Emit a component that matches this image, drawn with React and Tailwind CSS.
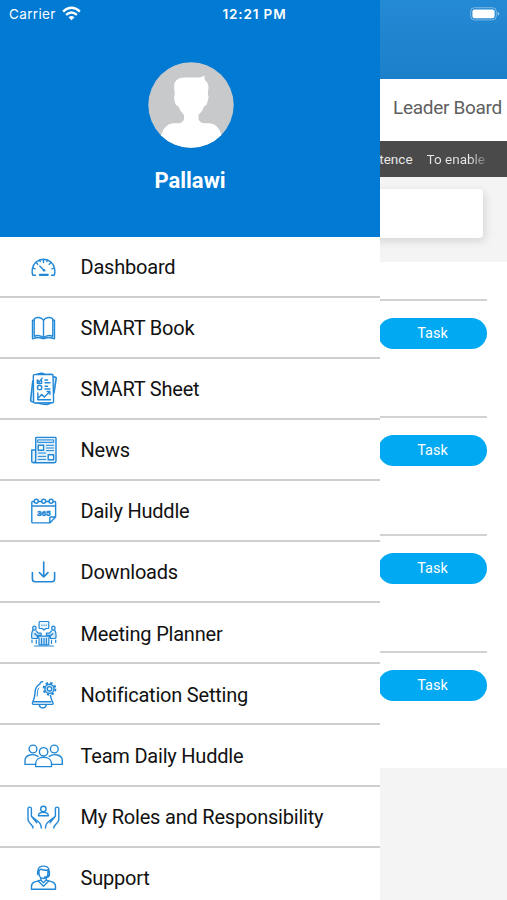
import React, { useState } from 'react';

const BLUE = '#2288d6';
const PALE = '#d3e9f9';

const Icon = ({ children }) => (
  <svg
    width="40"
    height="40"
    viewBox="0 0 40 40"
    fill="none"
    stroke={BLUE}
    strokeWidth="1.4"
    strokeLinecap="round"
    strokeLinejoin="round"
    className="shrink-0"
  >
    {children}
  </svg>
);

const DashboardIcon = () => (
  <Icon>
    <path d="M11.5 28.3H8.9C7.9 26.5 7.9 24.5 8.3 22A11.3 11.3 0 0 1 30.7 22C31.1 24.5 31.1 26.5 30.1 28.3H27.5" />
    <path d="M19.5 12.5v3M12.2 15.5l1.6 1.9M26.8 15.5l-1.6 1.9M8.6 21.2l2.5.7M30.4 21.2l-2.5.7M15.6 13.3l.6 1.3M23.4 13.3l-.6 1.3" />
    <path d="M15.8 19l4.3 4.4" />
    <circle cx="20" cy="23.3" r="1" fill={BLUE} strokeWidth="0.6" />
    <path d="M15.8 27.8h8" strokeWidth="2.2" />
  </Icon>
);

const BookIcon = () => (
  <Icon>
    <path d="M10.3 28.5L19.5 30.2L28.7 28.5L30.5 31H8.5Z" fill={PALE} stroke="none" />
    <path d="M19.5 12.3C17.6 9 12 8.6 10.2 11V28.3C12.8 27 17 27.2 19.5 29.8C22 27.2 26.2 27 28.8 28.3V11C27 8.6 21.4 9 19.5 12.3V29.5" fill="#fff" />
    <path d="M9.9 12.2H8.5V30.8C12 29.4 16.5 29.2 18.4 30.6H20.6C22.5 29.2 27 29.4 30.5 30.8V12.2H29.1" />
  </Icon>
);

const SheetIcon = () => (
  <Icon>
    <path d="M10.5 6L17 4.2L20 4.9M29 7.6L31.6 8.2Q32.4 8.5 32.2 9.5L30 24M8.8 12L6.6 31Q6.5 32.3 8 32.7L18 35L23 35.5L26 34.6" fill={PALE} strokeWidth="1.6" />
    <path d="M10.5 5.6L27.7 5.2Q29 5.2 29 6.6L29.6 32.4Q29.6 33.7 28.4 33.7L11 34Q9.6 34 9.6 32.7L9.3 7Q9.3 5.7 10.5 5.6Z" fill="#fff" />
    <path d="M13.6 10.9l1.5 2.2 3-4M13.3 11V14.4h4.3v-2.7M21 11h2.6M21 13.8h5" />
    <circle cx="15.6" cy="18.4" r="2.2" />
    <path d="M21 17.3h2.6M21 20h5" />
    <path d="M13.8 24V30.7H26.5M14.5 28.8L17.7 25.6L20.4 27.9L25.7 22.8M23 22.5h2.9v2.8" />
  </Icon>
);

const NewsIcon = () => (
  <Icon>
    <path d="M11.7 30.5V8Q11.7 7.4 12.3 7.4H31.3Q32 7.4 32 8V31Q32 32.7 30.3 32.7H9.7Q7.7 32.7 7.7 30.7V20H11.7V30.6Q11.7 32.5 9.8 32.5" fill="#e3f1fb" />
    <path d="M14 9.9H29.7V12.4H14Z" fill={PALE} strokeWidth="1" />
    <path d="M14.2 15.2H19.6V20.2H14.2ZM24.2 24.8H29.6V29.8H24.2Z" fill="#fff" />
    <path d="M22.4 15.3h7.2M22.4 18h7.2M22.4 20.6h7.2M14.2 23h7.4M14.2 26.4h7.4M14.2 29.4h7.4" strokeWidth="1" />
  </Icon>
);

const CalendarIcon = () => (
  <Icon>
    <path d="M10.2 10.5H8.6Q7.8 10.5 7.8 11.3V31Q7.8 31.9 8.6 31.9H25.8L31.6 26V11.3Q31.6 10.5 30.8 10.5H29.3M14.3 10.5H17.6M21.8 10.5H25.1M8 15H31.4M25.8 31.7V27Q25.8 26 26.8 26H31.4" />
    <circle cx="12.3" cy="10.3" r="2" />
    <circle cx="19.7" cy="10.3" r="2" />
    <circle cx="27.1" cy="10.3" r="2" />
    <text
      x="19.8"
      y="25.4"
      textAnchor="middle"
      fontFamily="Roboto, sans-serif"
      fontSize="7.6"
      fontWeight="900"
      textLength="13.4"
      lengthAdjust="spacingAndGlyphs"
      fill={BLUE}
      strokeWidth="0.4"
    >
      365
    </text>
  </Icon>
);

const DownloadIcon = () => (
  <Icon>
    <g strokeWidth="1.6">
      <path d="M19.7 10V24.4M15.4 20.6L19.7 24.9L24 20.6" />
      <path d="M8.4 20.5V27Q8.4 29.8 11.2 29.8H27.8Q30.6 29.8 30.6 27V20.5" />
    </g>
  </Icon>
);

const MeetingIcon = () => (
  <Icon>
    <g strokeWidth="1.2" fill={PALE}>
      <path d="M15.7 7.5H24Q24.8 7.5 24.8 8.3V13.6Q24.8 14.5 24 14.5H21.7L20 16.2L18.3 14.5H16Q15.1 14.5 15.1 13.6V8.5Q15.1 7.5 15.7 7.5Z" fill="#eef7fd" />
      <path d="M17.8 11.2h.2M20 11.2h.2M22.2 11.2h.2" />
      <ellipse cx="10.4" cy="14.2" rx="1.7" ry="2" />
      <ellipse cx="29.4" cy="14.2" rx="1.7" ry="2" />
      <path d="M8.9 16.5Q7.5 18 7.6 21V23.5Q7.6 24.5 9 24.5H13.3V21.5L10.9 20M12.2 17L14.2 19.2H17.2V21.3H12.5L10.8 19.5M30.8 16.5Q32.1 18 32 21V23.5Q32 24.5 30.6 24.5H26.3V21.5L28.7 20M27.4 17L25.4 19.2H22.4V21.3H27.1L28.8 19.5" />
      <path d="M14 22.2H25.8L24.8 24.4V30.8H15V24.4Z" />
      <path d="M17.5 24.4V30.6M20 24.4V30.6M22.4 24.4V30.6M8 26V28.5M31.7 26V28.5M12.3 26V29.5M27.5 26V29.5M10.5 32H29.5" />
    </g>
  </Icon>
);

const BellIcon = () => (
  <Icon>
    <path d="M18.8 6.9A2.2 2.2 0 0 0 15.9 9.1C12.3 10.7 11.1 14 11 18C10.8 23 9.6 25.3 8.5 27.8Q8.2 29.4 9.4 29.4H28.3Q29.4 29.4 29 27.8C27.4 25 26.6 23.2 26.5 20.5M15.3 30Q15.8 32.9 18.7 33Q21.7 32.9 22.2 30M10.2 26.7H26.8" fill="none" />
    <path d="M13.2 21C13.5 18 13 15 14.8 13" strokeWidth="1" />
    <circle cx="25.5" cy="13.8" r="5.9" strokeWidth="2" strokeLinecap="butt" strokeDasharray="2.4 2.234" />
    <circle cx="25.5" cy="13.8" r="4.6" fill={PALE} />
    <circle cx="25.5" cy="13.8" r="2.2" fill="#fff" />
  </Icon>
);

const TeamIcon = () => (
  <Icon>
    <circle cx="9" cy="13" r="3.9" />
    <circle cx="30.3" cy="13" r="3.9" />
    <circle cx="19.6" cy="15.8" r="4.2" />
    <path d="M11 28.4H1V24.4C1.2 18.5 9.5 17.2 14 20.4M28.3 28.4H38.3V24.4C38.1 18.5 29.8 17.2 25.3 20.4" />
    <path d="M11.7 30.6V27C12 19.4 27.2 19.4 27.5 27V30.6Z" />
  </Icon>
);

const RolesIcon = () => (
  <Icon>
    <circle cx="19.4" cy="11.9" r="2.7" />
    <path d="M14.4 18.8C14.4 14.2 24.4 14.2 24.4 18.8Z" />
    <path d="M8.9 31V29.8L4.6 24.4Q4 23.3 4 22V11.8A1.7 1.7 0 0 1 7.4 11.8V19.2L13.8 24.2Q17.3 27 17.3 31M7.5 19.3L12.8 25.8" />
    <path d="M29.9 31V29.8L34.2 24.4Q34.8 23.3 34.8 22V11.8A1.7 1.7 0 0 0 31.4 11.8V19.2L25 24.2Q21.5 27 21.5 31M31.3 19.3L26 25.8" />
  </Icon>
);

const SupportIcon = () => (
  <Icon>
    <path d="M14 14V12.5C14 6.6 25 6.6 25 12.5V14M15 12.8Q16.2 10.6 18 11.5Q20.5 12.6 23.9 12V15.5A4.4 4.9 0 0 1 15 15.5Z" />
    <path d="M13.8 13.8V16.3M25.2 13.8V16.8Q24.8 19.4 20.8 19.2" strokeWidth="1.8" />
    <path d="M16.8 19.8V22L19.5 24.8L22.2 22V19.8M16.5 22.2L10.8 23.8Q7.5 25 7.5 28.2V31.2H31.5V28.2Q31.5 25 28.2 23.8L22.5 22.2M14.5 23.3L19.5 28.3L24.5 23.3" />
  </Icon>
);

const menuItems = [
  { label: 'Dashboard', icon: DashboardIcon },
  { label: 'SMART Book', icon: BookIcon },
  { label: 'SMART Sheet', icon: SheetIcon },
  { label: 'News', icon: NewsIcon },
  { label: 'Daily Huddle', icon: CalendarIcon },
  { label: 'Downloads', icon: DownloadIcon },
  { label: 'Meeting Planner', icon: MeetingIcon },
  { label: 'Notification Setting', icon: BellIcon },
  { label: 'Team Daily Huddle', icon: TeamIcon },
  { label: 'My Roles and Responsibility', icon: RolesIcon },
  { label: 'Support', icon: SupportIcon },
];

const Avatar = () => (
  <svg width="86" height="86" viewBox="0 0 86 86" className="ml-px">
    <defs>
      <clipPath id="avatar">
        <circle cx="43" cy="43" r="42.7" />
      </clipPath>
    </defs>
    <g clipPath="url(#avatar)">
      <rect width="86" height="86" fill="#c8c9cb" />
      <path
        fill="#fff"
        d="M31.5 16.2Q34 15.3 38 15.5H49Q54 15.7 56.3 13.6L56.8 18Q60 20 60.5 25L59.8 32Q61 34 60 38Q59 43.5 56 44.5Q54.5 49.5 50.5 53V57Q51.5 61 57 61.3H62Q70 62 73 72L78 86H8L13.5 72Q17 62 25 61.3H30Q35 61 36 57V53Q32.5 50 30.5 44.5Q27.5 43.5 26.5 39Q25.5 35 26.8 32Q25.5 24 26.8 20.5Q28 17.5 31.5 16.2Z"
      />
    </g>
  </svg>
);

const StatusBar = () => (
  <div className="absolute inset-x-0 top-0 flex h-7 items-center justify-between pl-[9px] pr-[7px] font-['Inter',sans-serif] text-white">
    <div className="flex w-40 items-center gap-1.5">
      <span className="text-[13.5px] tracking-[0.35px]">Carrier</span>
      <svg width="19" height="15" viewBox="0 0 19 15" fill="none" stroke="#fff" strokeWidth="2.4" className="-mt-0.5">
        <path d="M1.1 5.6Q9.5 -1.9 17.9 5.6" />
        <path d="M4.1 8.8Q9.5 4.1 14.9 8.8" />
        <path d="M6.5 11.2Q9.5 8.8 12.5 11.2L9.5 14.3Z" fill="#fff" stroke="none" />
      </svg>
    </div>
    <span className="text-[13.5px] font-semibold tracking-[0.85px]">12:21 PM</span>
    <div className="flex w-40 justify-end">
      <svg width="30" height="14" viewBox="0 0 30 14" className="-mt-px">
        <rect x="0.7" y="0.7" width="25.6" height="12.2" rx="3.8" fill="none" stroke="#fff" strokeOpacity="0.4" />
        <rect x="2.4" y="2.4" width="22.2" height="8.8" rx="2.2" fill="#fff" />
        <path d="M27.6 4.8Q29.4 5.3 29.4 6.8Q29.4 8.3 27.6 8.8Z" fill="#fff" fillOpacity="0.5" />
      </svg>
    </div>
  </div>
);

const HomeScreen = () => (
  <div className="flex h-full flex-col bg-[#f4f4f4]">
    <div className="h-[79px] shrink-0 bg-linear-to-b from-[#258ad5] to-[#1b7fca]" />
    <div className="flex h-[62px] shrink-0 items-center justify-end bg-white pr-[5px]">
      <span className="pb-1 text-[19px] tracking-[-0.3px] text-[#606060]">Leader Board</span>
    </div>
    <div className="flex h-9 shrink-0 items-center justify-end gap-3.5 bg-[#4a4a4a] pr-[22px] text-[13.5px] text-[#e8e8e8]">
      <span>tence</span>
      <span className="bg-linear-to-r from-[#e8e8e8] from-75% to-[#777] bg-clip-text text-transparent">
        To enable
      </span>
    </div>
    <div className="h-[85px] shrink-0 pl-6 pr-6 pt-3">
      <div className="h-[49px] rounded bg-white shadow-[2px_3px_10px_rgba(0,0,0,0.13)]" />
    </div>
    <div className="h-[506px] shrink-0 bg-white pl-5 pr-5 pt-[37px]">
      {[1, 2, 3, 4].map((n) => (
        <div key={n} className="flex h-[117.3px] items-start justify-end border-t-2 border-[#d2d2d2] pt-[17px]">
          <button className="h-[31px] w-[109px] rounded-full bg-[#00a9f1] pt-px text-[14.5px] text-white">
            Task
          </button>
        </div>
      ))}
    </div>
  </div>
);

const Drawer = ({ active, onSelect }) => (
  <aside className="absolute inset-y-0 left-0 flex w-[380px] flex-col overflow-hidden bg-white">
    <div className="flex h-[236.7px] shrink-0 flex-col items-center bg-[#007ad3] pt-[62px]">
      <Avatar />
      <h2 className="mt-[17px] text-[22px] font-bold leading-8 text-white">Pallawi</h2>
    </div>
    <nav className="flex flex-col">
      {menuItems.map(({ label, icon: ItemIcon }) => (
        <button
          key={label}
          onClick={() => onSelect(label)}
          aria-current={active === label}
          className="flex h-[61.1px] shrink-0 items-center gap-[16.5px] border-b-2 border-[#cecece] pl-6 pt-[1.5px] text-left text-[20px] tracking-[-0.21px] text-[#111]"
        >
          <ItemIcon />
          <span>{label}</span>
        </button>
      ))}
    </nav>
  </aside>
);

const App = () => {
  const [active, setActive] = useState('Dashboard');

  return (
    <div className="relative h-[900px] w-[507px] overflow-hidden font-['Roboto',sans-serif]">
      <HomeScreen />
      <Drawer active={active} onSelect={setActive} />
      <StatusBar />
    </div>
  );
};

export default App;
